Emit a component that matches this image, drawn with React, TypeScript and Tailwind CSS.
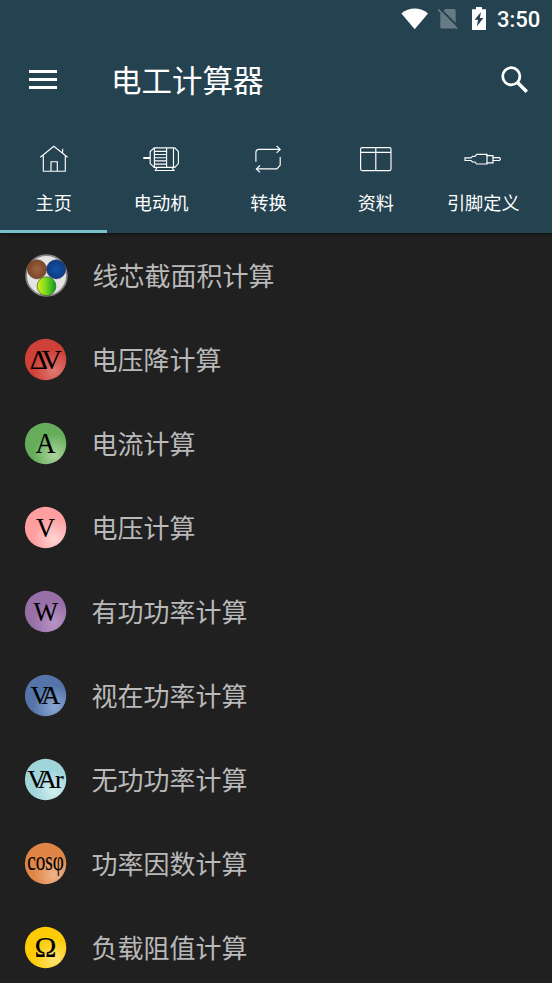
import type { ReactNode } from "react";

interface Tab {
  label: string;
  icon: ReactNode;
}

interface Calculation {
  label: string;
  icon: ReactNode;
}

interface BadgeProps {
  id: string;
  color: string;
  glow: string;
  text: string;
  size: number;
  /** One x per glyph, so that wide capitals can overlap. */
  x: string;
  baseline?: number;
  width?: number;
}

const tabs: Tab[] = [
  {
    label: "主页",
    icon: (
      <>
        <path d="M6.3 14.2 19.8 3.2 33.6 14.2M9.3 12.3V28.2H31.3V12.3M28.6 9.8V5.8" />
        <path d="M17 28V18.7H23.3V28" />
      </>
    ),
  },
  {
    label: "电动机",
    icon: (
      <>
        <path d="M2.3 15H9" strokeWidth={2} />
        <path d="M13.2 4.9H33.8L37.4 8.6V20.6L33.8 24.4H13.2L9.2 20.6V8.6Z" />
        <path d="M13.4 4.9V24.4M25.6 4.9V24.4M32.5 4.9V24.4" />
        <path d="M13.4 8.3H25.6M13.4 11.5H25.6M13.4 14.7H25.6M13.4 17.9H25.6M13.4 21.1H25.6" />
        <path d="M16 24.6 14.3 27.5H33L31 24.6" />
      </>
    ),
  },
  {
    label: "转换",
    icon: (
      <>
        <path d="M7.9 18.7V9.5Q7.9 6.4 11 6.4H32" />
        <path d="M28.6 3 32.2 6.4 28.6 9.8" />
        <path d="M32.2 14V22L29 25.9H8.5" />
        <path d="M12 22.5 8.4 25.9 12 29.3" />
      </>
    ),
  },
  {
    label: "资料",
    icon: (
      <>
        <rect x="4.6" y="4.6" width="30.4" height="23" rx="1.5" />
        <path d="M4.6 9.4H35M19.8 4.6V27.6" />
      </>
    ),
  },
  {
    label: "引脚定义",
    icon: (
      <>
        <path d="M2 14.8H8L9.5 13.4H12L13.6 11.4H24V12.6H30V14.6H36.5L37.5 16L36.5 17.5H30V19.8H24V21H13.6L12 19H9.5L8 17.5H2Z" />
        <path d="M24 12V20.5M30 14V18" />
      </>
    ),
  },
];

function Badge({ id, color, glow, text, size, x, baseline = 30, width }: BadgeProps) {
  return (
    <svg className="size-[42px] overflow-visible" viewBox="-0.6 -0.5 42 42">
      <defs>
        <radialGradient id={id} cx="0.7" cy="0.78" r="0.5">
          <stop offset="0" stopColor={glow} />
          <stop offset="1" stopColor={color} />
        </radialGradient>
      </defs>
      <circle cx="21" cy="21" r="20.7" fill={`url(#${id})`} />
      <text
        x={x}
        y={baseline}
        textLength={width}
        lengthAdjust={width ? "spacingAndGlyphs" : undefined}
        fontSize={size}
        className="fill-black stroke-black stroke-[0.15] font-['Liberation_Serif',serif]"
      >
        {text}
      </text>
    </svg>
  );
}

// Cross-section of a three-core cable.
function CableIcon() {
  return (
    <svg className="ml-px size-[43px]" viewBox="0 0 43 43">
      <defs>
        <radialGradient id="brown">
          <stop offset="0" stopColor="#9b6640" />
          <stop offset="1" stopColor="#7c4528" />
        </radialGradient>
        <radialGradient id="blue">
          <stop offset="0" stopColor="#1251a8" />
          <stop offset="1" stopColor="#103a80" />
        </radialGradient>
        <linearGradient id="earth">
          <stop offset="0" stopColor="#d9ee12" />
          <stop offset="0.45" stopColor="#80d91c" />
          <stop offset="1" stopColor="#089b24" />
        </linearGradient>
      </defs>
      <circle cx="21.5" cy="21.5" r="20.4" fill="#e4e4e4" stroke="#858585" strokeWidth="1.7" />
      <circle cx="12" cy="15.3" r="9.6" fill="url(#brown)" stroke="#603c2a" strokeWidth="0.5" />
      <circle cx="31.2" cy="15.3" r="9.6" fill="url(#blue)" stroke="#203f6a" strokeWidth="0.5" />
      <circle cx="21.5" cy="32.2" r="9.4" fill="url(#earth)" stroke="#416526" strokeWidth="0.7" />
    </svg>
  );
}

const calculations: Calculation[] = [
  { label: "线芯截面积计算", icon: <CableIcon /> },
  {
    label: "电压降计算",
    icon: <Badge id="drop" color="#cf4138" glow="#df7972" text="ΔV" size={28} x="5.2 17" />,
  },
  {
    label: "电流计算",
    icon: <Badge id="current" color="#66ad5b" glow="#add59f" text="A" size={29} x="11" width={20} />,
  },
  {
    label: "电压计算",
    icon: <Badge id="voltage" color="#ff9f9f" glow="#ffd6d5" text="V" size={28} x="11.3" width={19} />,
  },
  {
    label: "有功功率计算",
    icon: <Badge id="active" color="#9870a8" glow="#b795c5" text="W" size={27} x="8.8" width={24.5} />,
  },
  {
    label: "视在功率计算",
    icon: <Badge id="apparent" color="#5575aa" glow="#8da8d5" text="VA" size={26} x="6 16.8" baseline={29.3} />,
  },
  {
    label: "无功功率计算",
    icon: <Badge id="reactive" color="#a0d5da" glow="#d1eff0" text="VAr" size={26} x="2.6 13.3 30.4" baseline={29.3} />,
  },
  {
    label: "功率因数计算",
    icon: <Badge id="factor" color="#df8545" glow="#edb58d" text="cosφ" size={26.5} x="2.6" width={36.6} baseline={27} />,
  },
  {
    label: "负载阻值计算",
    icon: <Badge id="load" color="#ffcb05" glow="#ffe475" text="Ω" size={30} x="10" width={22} />,
  },
];

function StatusBar() {
  return (
    <div className="flex h-[38px] items-center pl-[401px]">
      <svg className="h-[22px] w-[27px]" viewBox="0 0 27 22" fill="white">
        <path d="M0.4 5.4C8 -1.2 19.5 -1.2 27 5.4L13.7 21.2Z" />
      </svg>
      <svg className="ml-2.5 h-[22px] w-5" viewBox="0 0 20 22">
        <path d="M7.5 1H16Q17.7 1 17.7 2.7V19Q17.7 20.5 16 20.5H4Q2.3 20.5 2.3 19V6Z" fill="#667b86" />
        <path d="M1.6 0.2 20.2 18.8" stroke="#254250" strokeWidth="2" />
        <path d="M0 1.4 19.2 20.9" stroke="#667b86" strokeWidth="1.7" />
      </svg>
      <svg className="mb-px ml-3.5 h-[23px] w-[14px]" viewBox="0 0 14 23">
        <path d="M4 0H10V2.2H14V23H0V2.2H4Z" fill="white" />
        <path d="M9 5 2.6 12.8H6.1L4.8 19.4L11.4 11H7.8Z" fill="#254250" />
      </svg>
      <span className="mt-0.5 ml-[11px] font-[Roboto,sans-serif] text-[22px] leading-none font-medium">3:50</span>
    </div>
  );
}

export default function App() {
  return (
    <div className="flex h-[983px] w-[552px] flex-col overflow-hidden bg-[#202020] font-['Noto_Sans_CJK_SC',sans-serif]">
      <header className="relative h-[233px] shrink-0 bg-[#254250] text-white shadow-[0_1px_5px_rgba(0,0,0,0.55)]">
        <StatusBar />
        <div className="flex h-[82px] items-center pr-6 pl-[29px]">
          <button type="button" aria-label="菜单" className="flex w-7 flex-col gap-[5px]">
            <span className="h-[3px] bg-white" />
            <span className="h-[3px] bg-white" />
            <span className="h-[3px] bg-white" />
          </button>
          <h1 className="ml-[54px] flex-1 text-[30.5px] leading-none">电工计算器</h1>
          <button type="button" aria-label="搜索">
            <svg className="size-[27px]" viewBox="0 0 27 27" fill="none" stroke="white">
              <circle cx="10.3" cy="10.3" r="8.6" strokeWidth="2.8" />
              <path d="M16.8 16.8 25.8 25.8" strokeWidth="3.5" />
            </svg>
          </button>
        </div>
        <nav className="flex h-[113px]">
          {tabs.map((tab, index) => (
            <button
              key={tab.label}
              type="button"
              className={`flex w-[107.4px] flex-col items-center border-b-3 pt-[23px] ${
                index === 0 ? "border-[#78c2cb]" : "border-transparent"
              }`}
            >
              <svg
                className="h-8 w-10"
                viewBox="0 0 40 32"
                fill="none"
                stroke="white"
                strokeWidth={1.15}
              >
                {tab.icon}
              </svg>
              <span className="mt-[17px] text-[18.2px] leading-5">{tab.label}</span>
            </button>
          ))}
        </nav>
      </header>
      <ul>
        {calculations.map((item, index) => (
          <li key={item.label} className="flex h-[84px] items-center pl-6">
            <span className={`flex shrink-0 ${index === 0 ? "w-[68.5px]" : "w-[67.5px]"}`}>{item.icon}</span>
            <span className="text-[26px] leading-none text-[#b9b9b9]">{item.label}</span>
          </li>
        ))}
      </ul>
    </div>
  );
}
